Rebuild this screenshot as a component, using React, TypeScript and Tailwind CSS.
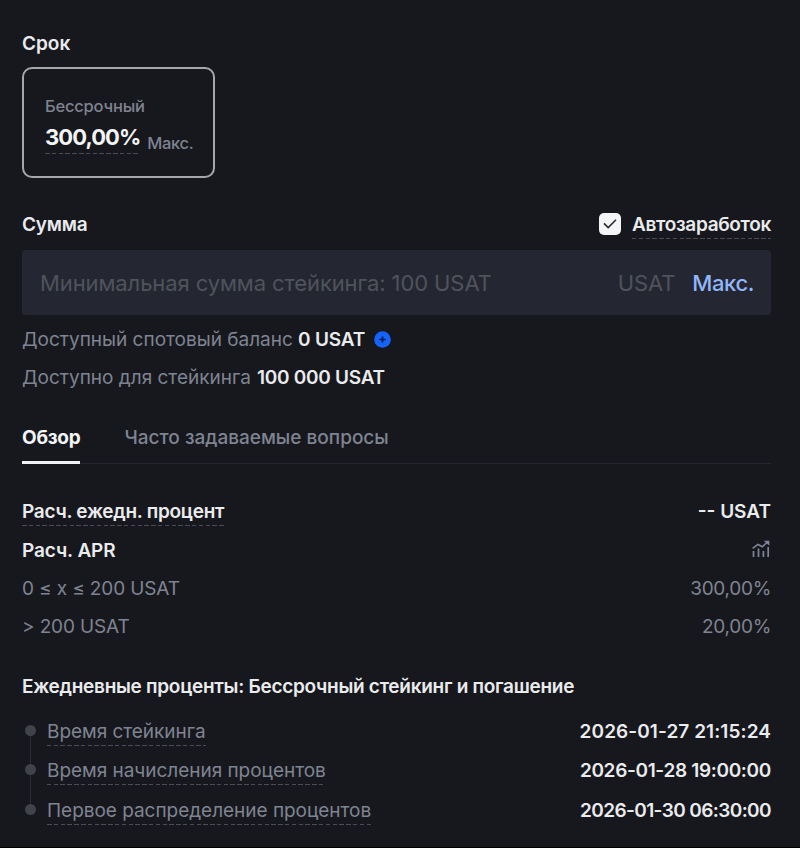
import { useState } from 'react';
import clsx from 'clsx';

const DASHED =
  'bg-[repeating-linear-gradient(90deg,#4a4c54_0_4.5px,transparent_4.5px_6.8px)] bg-[length:100%_1px] bg-bottom bg-no-repeat';

const tiers = [
  { range: '0 ≤ x ≤ 200 USAT', apr: '300,00%' },
  { range: '> 200 USAT', apr: '20,00%' },
];

// tracking evens out the width of the timestamps
const timeline = [
  { label: 'Время стейкинга', time: '2026-01-27 21:15:24', tracking: 'tracking-[0.08px]' },
  { label: 'Время начисления процентов', time: '2026-01-28 19:00:00', tracking: 'tracking-[-0.33px]' },
  { label: 'Первое распределение процентов', time: '2026-01-30 06:30:00', tracking: 'tracking-[-0.6px]' },
];

function ChartIcon() {
  return (
    <svg width="18" height="18" viewBox="0 0 18 18" fill="none" stroke="#80859a" strokeWidth="1.7" className="mr-[1px] mb-[4px]">
      <path d="M1.5 11V17M6.5 8.6V17M11.4 11V17M16.2 7V17" />
      <path d="M.6 8.4 6 4.4l4.4 2.4L15.4 2" />
      <path d="M11.8.8h5.6v5z" fill="#80859a" stroke="none" />
    </svg>
  );
}

function PlusBadge() {
  return (
    <svg width="17" height="17" viewBox="0 0 17 17" className="mb-[2px]">
      <circle cx="8.5" cy="8.5" r="8.3" fill="#1463fb" />
      <path d="M8.5 5.4v6.2M5.4 8.5h6.2" stroke="#101c48" strokeWidth="1.7" />
    </svg>
  );
}

export default function App() {
  const [auto, setAuto] = useState(true);
  const [amount, setAmount] = useState('');

  return (
    <div className="h-[848px] w-[800px] overflow-hidden border-b border-black bg-[#17181d] pr-[29px] pl-[22px] pt-[30px] font-['Inter','Liberation_Sans',sans-serif] text-[19px] text-[#7f8492]">
      <h2 className="h-7 leading-7 font-semibold text-[#eaebed]">Срок</h2>

      <div className="mt-[9px] h-[111px] w-[193px] rounded-[10px] border-2 border-[#a6a7ab] pl-[21px] pt-[25px]">
        <div className="h-6 text-[16.5px] leading-6 font-medium tracking-[-0.2px]">Бессрочный</div>
        <div className="mt-px flex">
          <span
            className={clsx('h-[35px] text-[22px] leading-[37px] font-bold tracking-[-0.95px] text-[#f3f4f5]', DASHED)}
          >
            300,00%
          </span>
          <span className="ml-[7px] text-[16.5px] leading-[49px] font-medium tracking-[-0.35px]">Макс.</span>
        </div>
      </div>

      <div className="mt-[32px] flex h-[29px] items-start justify-between">
        <h2 className="leading-[30px] font-semibold tracking-[-0.2px] text-[#eaebed]">Сумма</h2>
        <div className="flex">
          <button
            onClick={() => setAuto(!auto)}
            className="mt-[3px] mr-[11px] flex h-[22px] w-[22px] items-center justify-center rounded-[5px] bg-[#f4f5f7]"
          >
            {auto && (
              <svg width="14" height="12" viewBox="0 0 14 12" fill="none" stroke="#26272c" strokeWidth="1.5">
                <path d="M1 5.4 5.2 9.6 13 1.8" />
              </svg>
            )}
          </button>
          <span className={clsx('h-[29px] leading-[30px] font-semibold tracking-[-0.33px] text-[#eaebed]', DASHED)}>
            Автозаработок
          </span>
        </div>
      </div>

      <div className="mt-[11px] flex h-[65px] items-center rounded-[4px] bg-[#242731] pr-[17px] pl-[18px] text-[22px] tracking-[-0.1px]">
        <input
          value={amount}
          onChange={(e) => setAmount(e.target.value)}
          placeholder="Минимальная сумма стейкинга: 100 USAT"
          className="min-w-0 flex-1 bg-transparent pt-px outline-none placeholder:text-[#50535c]"
        />
        <span className="pt-px text-[#50535c]">USAT</span>
        <button className="ml-[17px] pt-px font-medium tracking-[-0.4px] text-[#92b6fa]">Макс.</button>
      </div>

      <div className="mt-[6px] flex h-[38px] items-center">
        <span>Доступный спотовый баланс</span>
        <span className="ml-[5px] mr-[9px] font-semibold tracking-[-0.15px] text-[#eaebed]">0 USAT</span>
        <PlusBadge />
      </div>
      <div className="flex h-[38px] items-center">
        <span>Доступно для стейкинга</span>
        <span className="ml-[6px] font-semibold tracking-[-0.27px] text-[#eaebed]">100 000 USAT</span>
      </div>

      <div className="mt-[20px] flex h-[47px] border-b border-[#26272e]">
        <button className="flex h-[47px] items-start border-b-[3px] border-[#f1f2f3] font-bold leading-[41px] tracking-[-0.25px] text-[#f3f4f5]">
          Обзор
        </button>
        <button className="ml-[44px] flex items-start font-medium leading-[41px]">Часто задаваемые вопросы</button>
      </div>

      <div className="mt-[34px] flex h-[34px] justify-between font-semibold leading-7 text-[#eaebed]">
        <span className={clsx('h-[28px] tracking-[-0.27px]', DASHED)}>Расч. ежедн. процент</span>
        <span>-- USAT</span>
      </div>
      <div className="flex h-[38px] items-center justify-between font-semibold text-[#eaebed]">
        <span className="tracking-[-0.1px]">Расч. APR</span>
        <ChartIcon />
      </div>
      {tiers.map((t) => (
        <div key={t.range} className="flex h-[38px] items-center justify-between">
          <span className="tracking-[-0.13px]">{t.range}</span>
          <span className="tracking-[-0.3px]">{t.apr}</span>
        </div>
      ))}

      <h3 className="mt-[26px] h-7 leading-[29px] font-semibold tracking-[-0.28px] text-[#eaebed]">
        Ежедневные проценты: Бессрочный стейкинг и погашение
      </h3>

      <div className="mt-[17px]">
        {timeline.map((step, i) => (
          <div key={step.label} className="flex h-[39.4px] leading-[29px]">
            <div className="mr-[11px] ml-[2px] flex w-[12px] flex-col items-center pt-[8px]">
              <span className="h-[11px] w-[11px] shrink-0 rounded-full bg-[#41434a]" />
              {i < timeline.length - 1 && <span className="-mb-2 w-px flex-1 bg-[#2b2d34]" />}
            </div>
            <span className={clsx('h-[29px] tracking-[-0.03px]', DASHED)}>{step.label}</span>
            <span className={clsx('ml-auto font-semibold text-[#eaebed]', step.tracking)}>{step.time}</span>
          </div>
        ))}
      </div>
    </div>
  );
}
